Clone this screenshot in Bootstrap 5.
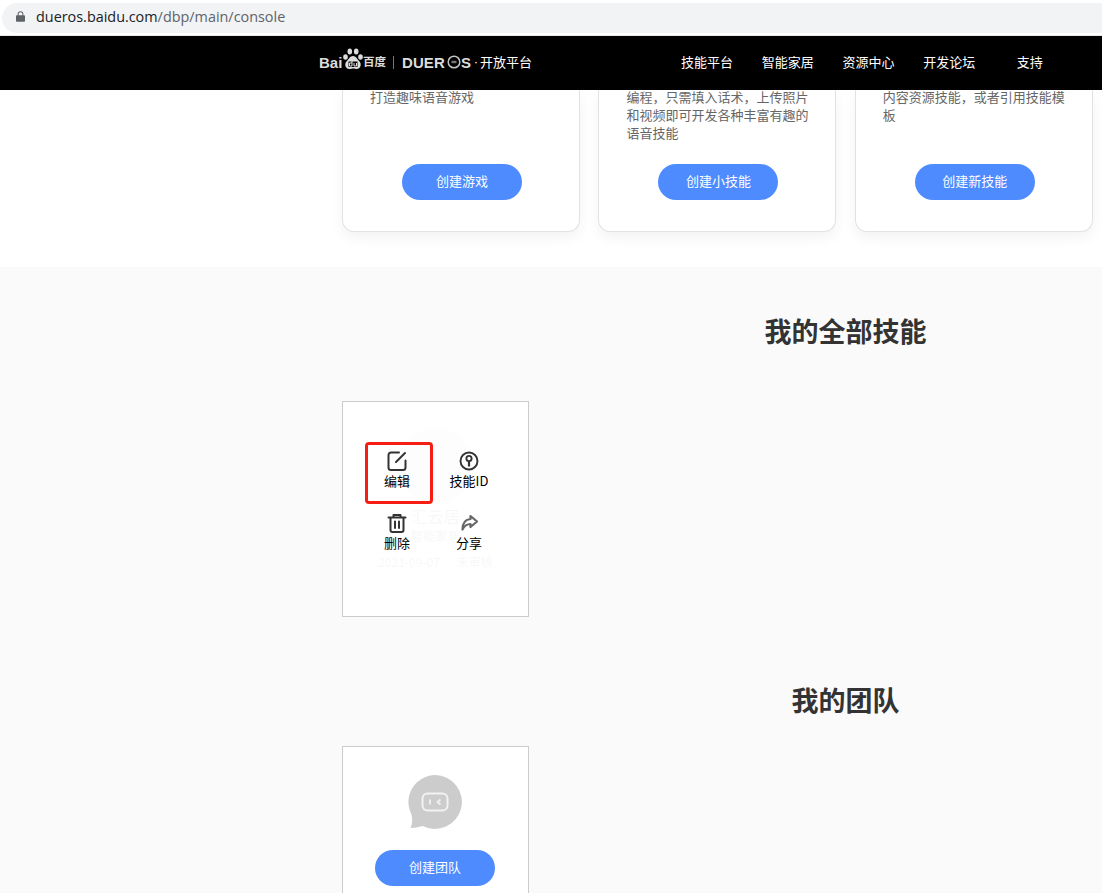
<!DOCTYPE html>
<html lang="zh-CN">
<head>
    <meta charset="UTF-8">
    <meta name="viewport" content="width=device-width, initial-scale=1.0">
    <title>DuerOS 开放平台</title>
    <link href="https://cdn.jsdelivr.net/npm/bootstrap@5.3.3/dist/css/bootstrap.min.css" rel="stylesheet">
    <style>
        html, body { height: 893px; overflow: hidden; }
        body {
            background: #fff;
            color: #333;
            font-family: "Noto Sans CJK SC", "Liberation Sans", sans-serif;
            font-size: 13px;
        }
        .addr-wrap { height: 36px; padding: 3px 0 0 2px; background: #fff; border-bottom: 1px solid #e8e9eb; }
        .addr-bar {
            height: 30px;
            background: #f1f3f4;
            border-radius: 15px 0 0 15px;
            padding: 0 0 3px 14px;
            gap: 11px;
            font-family: "Open Sans", "Liberation Sans", sans-serif;
            font-size: 14.4px;
            color: #5f6368;
        }
        .addr-bar b { font-weight: 400; color: #202124; }
        .top-bar { height: 54px; background: #000; padding: 0 0 2px 319px; }
        .logo-grey { color: #dcdcdc; font-family: "Liberation Sans", sans-serif; font-weight: 700; line-height: 1; white-space: nowrap; }
        .logo-bai { font-size: 15px; width: 24px; }
        .logo-paw { width: 20px; height: 23px; margin-top: -6px; }
        .logo-du { font-size: 11.5px; width: 24px; font-family: "Noto Sans CJK SC", sans-serif; }
        .logo-sep { width: 1px; height: 13px; background: #777; margin: 0 8px 0 6px; }
        .logo-duer { font-size: 15px; width: 45px; letter-spacing: .1px; }
        .logo-os { width: 14px; height: 14px; }
        .logo-s { font-size: 15px; width: 11px; }
        .logo-dot { color: #fff; width: 8px; font-family: "Liberation Sans", sans-serif; text-align: center; }
        .logo-txt { color: #fff; font-size: 13px; }
        .top-links { margin-left: 149px; gap: 28.7px; }
        .top-links a { color: #fff; text-decoration: none; font-size: 13px; white-space: nowrap; }
        .top-links a.last-link { margin-left: 13px; }
        .intro { height: 177px; padding-left: 342px; gap: 18.4px; background: #fff; }
        .intro-card {
            width: 238px;
            height: 142px;
            padding: 0 23px 0 27px;
            background: #fff;
            border: 1px solid #e2e2e2;
            border-top: 0;
            border-radius: 0 0 12px 12px;
            box-shadow: 0 6px 14px rgba(0, 0, 0, .05);
        }
        .intro-card p { height: 74px; margin: -2.5px 0 2.5px; padding: 0; color: #666; font-size: 13px; line-height: 18px; }
        .pill {
            width: 120px;
            height: 36px;
            padding: 0 0 2px;
            border: 0;
            border-radius: 18px;
            background: #4d8bff;
            color: #fff;
            font-size: 13px;
            line-height: 34px;
            text-align: center;
        }
        .intro-card .pill { margin-left: 32px; }
        .lower { height: 626px; background: #fafafa; padding-left: 342px; }
        .sec-title { margin: 0 0 0 247px; font-size: 27px; font-weight: 700; line-height: 40px; color: #333; text-align: center; }
        .sec-one { padding-top: 44px; height: 134px; }
        .sec-two { height: 66px; }
        .box { width: 187px; background: #fff; border: 1px solid #ccc; }
        .skill-box { height: 216px; margin-bottom: 63px; }
        .faint { color: #333; text-align: center; padding-top: 26px; }
        .faint-dot { width: 76px; height: 76px; margin: 0 auto 2px; border-radius: 50%; background: #bbb; }
        .faint-name { font-size: 16px; line-height: 20px; }
        .faint-sub { font-size: 12.5px; line-height: 20px; }
        .faint-meta { font-size: 12px; line-height: 32px; gap: 17px; }
        .veil { inset: 0; background: rgba(255, 255, 255, .96); }
        .act-grid { inset: 40px 0 auto 18px; display: grid; grid-template-columns: 72px 72px; grid-auto-rows: 62px; }
        .act-item { color: #000; font-size: 13px; line-height: 18px; text-align: center; padding-top: 8px; }
        .act-item svg { display: block; width: 22px; height: 22px; margin: 0 auto; }
        .red-mark { left: 22px; top: 40px; width: 68px; height: 62px; border: 3px solid #f61e12; border-radius: 4px; }
        .team-box { height: 160px; padding-top: 27px; }
        .team-box svg { display: block; width: 56px; height: 56px; margin: 0 auto 20px; }
        .team-box .pill { margin-left: 32px; }
    </style>
</head>
<body>
    <div class="addr-wrap">
        <div class="addr-bar d-flex align-items-center">
            <svg width="9" height="11" viewBox="0 0 11 13"><path fill="#5f6368" d="M1 5h1V3.5a3.5 3.5 0 0 1 7 0V5h1a1 1 0 0 1 1 1v6a1 1 0 0 1-1 1H1a1 1 0 0 1-1-1V6a1 1 0 0 1 1-1zm2.2 0h4.6V3.5a2.3 2.3 0 0 0-4.6 0z"/></svg>
            <span><b>dueros.baidu.com</b>/dbp/main/console</span>
        </div>
    </div>

    <nav class="top-bar d-flex align-items-center">
        <div class="d-flex align-items-center flex-shrink-0">
            <span class="logo-grey logo-bai">Bai</span>
            <svg class="logo-paw" viewBox="0 0 20 23">
                <g fill="#dcdcdc">
                    <ellipse cx="6.8" cy="3.5" rx="2.3" ry="3"/>
                    <ellipse cx="13.2" cy="3.5" rx="2.3" ry="3"/>
                    <ellipse cx="2.5" cy="9" rx="2.3" ry="2.8"/>
                    <ellipse cx="17.5" cy="9" rx="2.3" ry="2.8"/>
                    <path d="M10 8c3 0 4 3 6.500 5.500 2.500 2.500 1 8-3.500 7.500-1.500-.2-2-.5-3-.5s-1.500.3-3 .5c-4.500.5-6-5-3.500-7.500C6 11 7 8 10 8z"/>
                </g>
                <path fill="#000" d="M5.500 13.500h9v5.500h-9z"/>
                <path fill="none" stroke="#dcdcdc" stroke-width="1" d="M9 12.500v5.500H6.500v-3H9M11 15v3h2.500v-3"/>
            </svg>
            <span class="logo-grey logo-du">百度</span>
            <span class="logo-sep"></span>
            <span class="logo-grey logo-duer">DUER</span>
            <svg class="logo-os" viewBox="0 0 14 14">
                <circle cx="7" cy="7" r="5.8" fill="none" stroke="#c4c4c4" stroke-width="1.5"/>
                <path fill="#777" d="M4.500 5.800h5v2.400h-5z"/>
            </svg>
            <span class="logo-grey logo-s">S</span>
            <span class="logo-dot">·</span>
            <span class="logo-txt">开放平台</span>
        </div>
        <div class="top-links d-flex">
            <a href="#">技能平台</a>
            <a href="#">智能家居</a>
            <a href="#">资源中心</a>
            <a href="#">开发论坛</a>
            <a class="last-link" href="#">支持</a>
        </div>
    </nav>

    <section class="intro d-flex">
        <div class="intro-card">
            <p>打造趣味语音游戏</p>
            <button class="pill" type="button">创建游戏</button>
        </div>
        <div class="intro-card">
            <p>编程，只需填入话术，上传照片和视频即可开发各种丰富有趣的语音技能</p>
            <button class="pill" type="button">创建小技能</button>
        </div>
        <div class="intro-card">
            <p>内容资源技能，或者引用技能模板</p>
            <button class="pill" type="button">创建新技能</button>
        </div>
    </section>

    <main class="lower">
        <div class="sec-one"><h2 class="sec-title">我的全部技能</h2></div>

        <div class="box skill-box position-relative">
            <div class="faint">
                <div class="faint-dot"></div>
                <div class="faint-name">汇云居</div>
                <div class="faint-sub">智能家居</div>
                <div class="faint-meta d-flex justify-content-center"><span>2021-09-07</span><span>未审核</span></div>
            </div>
            <div class="veil position-absolute"></div>
            <div class="act-grid position-absolute">
                <div class="act-item">
                    <svg viewBox="0 0 22 22" fill="none" stroke="#333" stroke-width="2" stroke-linecap="round" stroke-linejoin="round"><path d="M19.500 10.500v7a2.500 2.500 0 0 1-2.500 2.500H5a2.500 2.500 0 0 1-2.500-2.500V5A2.500 2.500 0 0 1 5 2.500h8"/><path d="M19 3 10 12"/></svg>
                    编辑
                </div>
                <div class="act-item">
                    <svg viewBox="0 0 22 22" fill="none" stroke="#333" stroke-width="1.9"><circle cx="11" cy="11" r="8.5"/><circle cx="11" cy="8.5" r="2.6"/><path d="M11 11v5.500" stroke-width="2.2"/></svg>
                    技能ID
                </div>
                <div class="act-item">
                    <svg viewBox="0 0 22 22" fill="none" stroke="#333" stroke-width="2" stroke-linecap="round" stroke-linejoin="round"><path d="M2.500 5.500h17M7.500 5.500V3h7v2.500M4.500 5.500v12.500a2 2 0 0 0 2 2h9a2 2 0 0 0 2-2V5.500M9 9.500v6.500M13 9.500v6.500"/></svg>
                    删除
                </div>
                <div class="act-item">
                    <svg viewBox="0 0 22 22" fill="none" stroke="#666" stroke-width="2.2" stroke-linejoin="round"><path d="M12.500 4 19 9.500 12.500 15v-3c-3.500 0-6 1.500-8 5.500 0-6.500 3-10 8-10.500z"/></svg>
                    分享
                </div>
            </div>
            <div class="red-mark position-absolute"></div>
        </div>

        <div class="sec-two"><h2 class="sec-title">我的团队</h2></div>

        <div class="box team-box">
            <svg viewBox="1 0 56 56">
                <path fill="#ccc" d="M28 1a27 27 0 1 1-12.500 51C12 53 7 54 3.500 54c1.500-3 2.300-8 1-13.500A27 27 0 0 1 28 1z"/>
                <rect x="15.500" y="19.500" width="25" height="17" rx="5" fill="none" stroke="#f2f2f2" stroke-width="2"/>
                <path fill="none" stroke="#f2f2f2" stroke-width="1.8" d="M23 25.500v5M33.500 25.500 30.500 28l3 2.500"/>
            </svg>
            <button class="pill" type="button">创建团队</button>
        </div>
    </main>

    <script src="https://cdn.jsdelivr.net/npm/bootstrap@5.3.3/dist/js/bootstrap.bundle.min.js"></script>
</body>
</html>
